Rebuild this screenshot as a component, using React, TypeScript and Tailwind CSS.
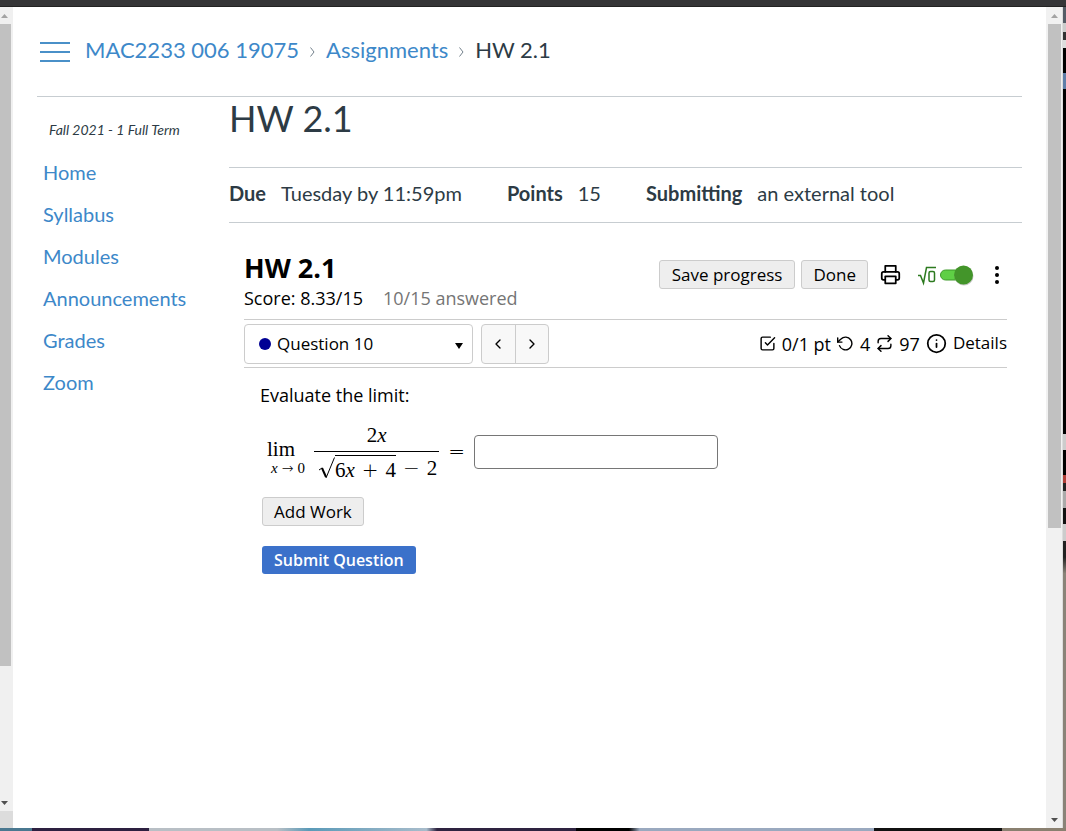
import { FiCheckSquare, FiChevronLeft, FiChevronRight, FiInfo, FiPrinter, FiRepeat, FiRotateCcw } from 'react-icons/fi';

const courseLinks = ['Home', 'Syllabus', 'Modules', 'Announcements', 'Grades', 'Zoom'];

function Arrow({ up, color }: { up?: boolean; color: string }) {
  return (
    <svg width="7" height="4" viewBox="0 0 7 4" fill={color} aria-hidden="true">
      <path d={up ? 'M0 4L3.500 0L7 4z' : 'M0 0h7L3.500 4z'} />
    </svg>
  );
}

function CourseScrollbar() {
  return (
    <div className="flex w-[13px] shrink-0 flex-col bg-[#f0f0f0]" aria-hidden="true">
      <div className="flex h-[17px] items-center pl-px">
        <Arrow up color="#a3a3a3" />
      </div>
      <div className="flex-1">
        <div className="h-5/6 w-[11px] bg-[#c1c1c1]" />
      </div>
      <div className="flex h-[17px] items-center pl-px">
        <Arrow color="#505050" />
      </div>
      <div className="h-[17px] bg-[#dcdcdc]" />
    </div>
  );
}

function PageScrollbar() {
  return (
    <div className="flex w-4 shrink-0 flex-col bg-[#f1f1f1]" aria-hidden="true">
      <div className="flex h-[17px] items-center justify-center">
        <Arrow up color="#a3a3a3" />
      </div>
      <div className="flex-1">
        <div className="ml-[2px] h-[64%] w-[13px] bg-[#c1c1c1]" />
      </div>
      <div className="flex h-[17px] items-center justify-center">
        <Arrow color="#505050" />
      </div>
    </div>
  );
}

function Separator() {
  return (
    <svg width="7" height="12" viewBox="0 0 7 12" fill="none" stroke="#73818c" className="mt-1" aria-hidden="true">
      <path d="M1.500 1.500L5 6L1.500 10.500" />
    </svg>
  );
}

function Breadcrumbs() {
  return (
    <header className="flex h-[90px] items-center gap-[15px] border-b border-[#c7cdd1] pb-1 pl-[3px]">
      <button type="button" aria-label="Toggle course navigation" className="flex w-[30px] flex-col gap-[7px] pt-1">
        <span className="h-[2px] w-full bg-[#4a90c8]" />
        <span className="h-[2px] w-full bg-[#4a90c8]" />
        <span className="h-[2px] w-full bg-[#4a90c8]" />
      </button>
      <nav
        aria-label="Breadcrumb"
        className="flex items-center gap-[10px] text-[22px] leading-8 whitespace-nowrap text-[#3d88c9]"
      >
        <a href="#course">MAC2233 006 19075</a>
        <Separator />
        <a href="#assignments">Assignments</a>
        <Separator />
        <span className="text-[#2d3b45]">HW 2.1</span>
      </nav>
    </header>
  );
}

function CourseNav() {
  return (
    <aside className="w-48 shrink-0 pt-[23px]">
      <p className="pl-3 text-sm leading-5 text-[#2d3b45] italic">Fall 2021 - 1 Full Term</p>
      <nav className="mt-[11px] flex flex-col pl-[6px] text-xl text-[#3d88c9]">
        {courseLinks.map((name) => (
          <a key={name} href={`#${name.toLowerCase()}`} className="flex h-[42px] items-center">
            {name}
          </a>
        ))}
      </nav>
    </aside>
  );
}

function AssignmentDetails() {
  return (
    <ul className="flex h-14 items-center gap-[45px] border-y border-[#c7cdd1] pb-1 text-xl whitespace-nowrap text-[#2d3b45]">
      <li className="flex gap-[15px]">
        <b>Due</b> Tuesday by 11:59pm
      </li>
      <li className="flex gap-[15px]">
        <b>Points</b> 15
      </li>
      <li className="flex gap-[15px]">
        <b>Submitting</b> an external tool
      </li>
    </ul>
  );
}

function MathToggle() {
  return (
    <button type="button" aria-label="Math keyboard" aria-pressed="true" className="ml-4">
      <svg width="57" height="24" viewBox="0 0 57 24" fill="none">
        <path d="M1 12.500h2.500L6.500 20L9.500 4.500H19" stroke="#2c7a1f" strokeWidth="1.500" />
        <rect x="12" y="8.500" width="5.500" height="10" rx="1.500" stroke="#2c7a1f" strokeWidth="1.500" />
        <rect x="23.500" y="7" width="25" height="10" rx="5" fill="#5fcf45" stroke="#3f9a2b" />
        <circle cx="47" cy="13" r="9.500" fill="#c9c9c9" />
        <circle cx="46.500" cy="12" r="9.500" fill="#43952a" />
      </svg>
    </button>
  );
}

function QuizHeader() {
  return (
    <div className="flex justify-between pb-[7px]">
      <div>
        <h2 className="text-[27px] leading-8 font-bold">HW 2.1</h2>
        <p className="flex gap-5 text-lg leading-7">
          <span>Score: 8.33/15</span>
          <span className="text-[#757575]">10/15 answered</span>
        </p>
      </div>
      <div className="flex h-[45px] items-center pr-[3px]">
        <button type="button" className="h-[29px] rounded-[3px] border border-[#ccc] bg-[#eee] px-3">
          Save progress
        </button>
        <button type="button" className="ml-[6px] h-[29px] rounded-[3px] border border-[#ccc] bg-[#eee] px-[11px]">
          Done
        </button>
        <button type="button" aria-label="Print" className="ml-3">
          <FiPrinter size={21} />
        </button>
        <MathToggle />
        <button type="button" aria-label="More options" className="ml-4 px-1">
          <svg width="6" height="20" viewBox="0 0 6 20">
            <circle cx="3" cy="3" r="2" />
            <circle cx="3" cy="10" r="2" />
            <circle cx="3" cy="17" r="2" />
          </svg>
        </button>
      </div>
    </div>
  );
}

function QuestionBar() {
  return (
    <div className="flex h-[49px] items-center justify-between border-y border-[#ccc]">
      <div className="flex items-center">
        <label className="relative flex items-center">
          <span className="absolute left-[15px] size-3 rounded-full bg-[#000094]" />
          <select
            aria-label="Question"
            className="h-10 w-[229px] appearance-none rounded border border-[#ccc] bg-white pl-8"
          >
            <option>Question 10</option>
          </select>
          <svg width="8" height="6" viewBox="0 0 8 6" className="absolute right-[10px] mt-1">
            <path d="M0 0h8L4 6z" />
          </svg>
        </label>
        <div className="ml-2 flex h-10 w-[68px] divide-x divide-[#ccc] rounded border border-[#ccc] bg-[#f8f8f8]">
          <button type="button" aria-label="Previous question" className="flex flex-1 items-center justify-center">
            <FiChevronLeft size={16} />
          </button>
          <button type="button" aria-label="Next question" className="flex flex-1 items-center justify-center">
            <FiChevronRight size={16} />
          </button>
        </div>
      </div>
      <div className="flex items-center gap-[6px] text-lg whitespace-nowrap">
        <FiCheckSquare size={17} />
        <span>0/1 pt</span>
        <FiRotateCcw size={17} />
        <span>4</span>
        <FiRepeat size={17} />
        <span>97</span>
        <button type="button" className="flex items-center gap-[6px] text-[17px]">
          <FiInfo size={21} />
          Details
        </button>
      </div>
    </div>
  );
}

function Op({ children }: { children: string }) {
  return <span className="mx-[7px] font-['DejaVu_Sans',sans-serif] text-xl font-extralight">{children}</span>;
}

function Limit() {
  return (
    <div className="flex items-center font-['Liberation_Serif',serif] text-[21px] whitespace-nowrap">
      <div className="flex flex-col pt-3">
        <span className="leading-5">lim</span>
        <span className="flex items-center pl-1 text-[15px] leading-[18px]">
          <i>x</i>
          <span className="mx-1 font-['DejaVu_Sans',sans-serif] text-sm leading-[18px] font-extralight">→</span>
          <span>0</span>
        </span>
      </div>
      <div className="ml-[9px] flex flex-col items-center">
        <div className="leading-8">
          2<i>x</i>
        </div>
        <div className="flex items-center border-t border-black pr-[2px] pl-1 leading-[30px]">
          <svg width="17" height="24" viewBox="0 0 17 24" fill="none" stroke="#000" aria-hidden="true">
            <path d="M1 14L4 12" />
            <path d="M4 12L8 21" strokeWidth="2" />
            <path d="M8 22L16.500 1.500" />
          </svg>
          <span className="mt-[3px] border-t border-black leading-5">
            6<i>x</i>
            <Op>+</Op>4
          </span>
          <span>
            <Op>−</Op>2
          </span>
        </div>
      </div>
      <span className="mx-[2px]">
        <Op>=</Op>
      </span>
    </div>
  );
}

function Question() {
  return (
    <form className="pl-4" onSubmit={(e) => e.preventDefault()}>
      <p className="pt-[15px] text-lg leading-6">Evaluate the limit:</p>
      <div className="mt-3 flex items-center pl-[7px]">
        <Limit />
        <input type="text" aria-label="Answer" className="h-[34px] w-[244px] rounded border border-[#767676] px-2" />
      </div>
      <div className="mt-[13px] flex flex-col items-start gap-5 pl-[2px]">
        <button type="button" className="h-[29px] rounded-[3px] border border-[#ccc] bg-[#eee] px-[11px]">
          Add Work
        </button>
        <button type="submit" className="h-7 rounded-[3px] bg-[#3b71ca] px-3 text-base font-semibold text-white">
          Submit Question
        </button>
      </div>
    </form>
  );
}

export default function App() {
  return (
    <div className="flex min-h-screen flex-col bg-white font-[Lato,sans-serif]">
      <div className="h-[7px] border-b border-[#222] bg-[#353537]" />
      <div className="flex flex-1">
        <CourseScrollbar />
        <div className="min-w-0 flex-1 px-6">
          <Breadcrumbs />
          <div className="flex">
            <CourseNav />
            <main className="min-w-0 flex-1">
              <h1 className="h-[70px] text-4xl leading-[42px] text-[#2d3b45]">HW 2.1</h1>
              <AssignmentDetails />
              <section className="px-[15px] pt-[29px] font-['Open_Sans',sans-serif] text-[17px] text-black">
                <QuizHeader />
                <QuestionBar />
                <Question />
              </section>
            </main>
          </div>
        </div>
        <PageScrollbar />
        {/* desktop behind the window */}
        <div className="w-1 border-l border-[#ddd] bg-[linear-gradient(#555c66_0_2%,#ccc_2%_3%,#333_3%_4%,#ddd_4%_5%,#000_5%_8%,#5f7ea8_8%_10%,#000_10%_52%,#ccc_52%_54%,#000_54%_57%,#b04038_57%_58%,#222_58%_59%,#aaa_59%_61%,#111_61%_63%,#ccc_63%_65%,#222_65%_67%,#8a8378_69%_100%)]" />
      </div>
      <div className="h-[3px] bg-[linear-gradient(90deg,#4a7890_0_3%,#2d2040_3%_14%,#b8bfc5_14%_26%,#5a9ab8_29%,#a8bccb_40%,#2e2340_41%_54%,#000_54%_59%,#9aa9bf_60%_82%,#111_82%_94%,#8a8070_94%)]" />
    </div>
  );
}
